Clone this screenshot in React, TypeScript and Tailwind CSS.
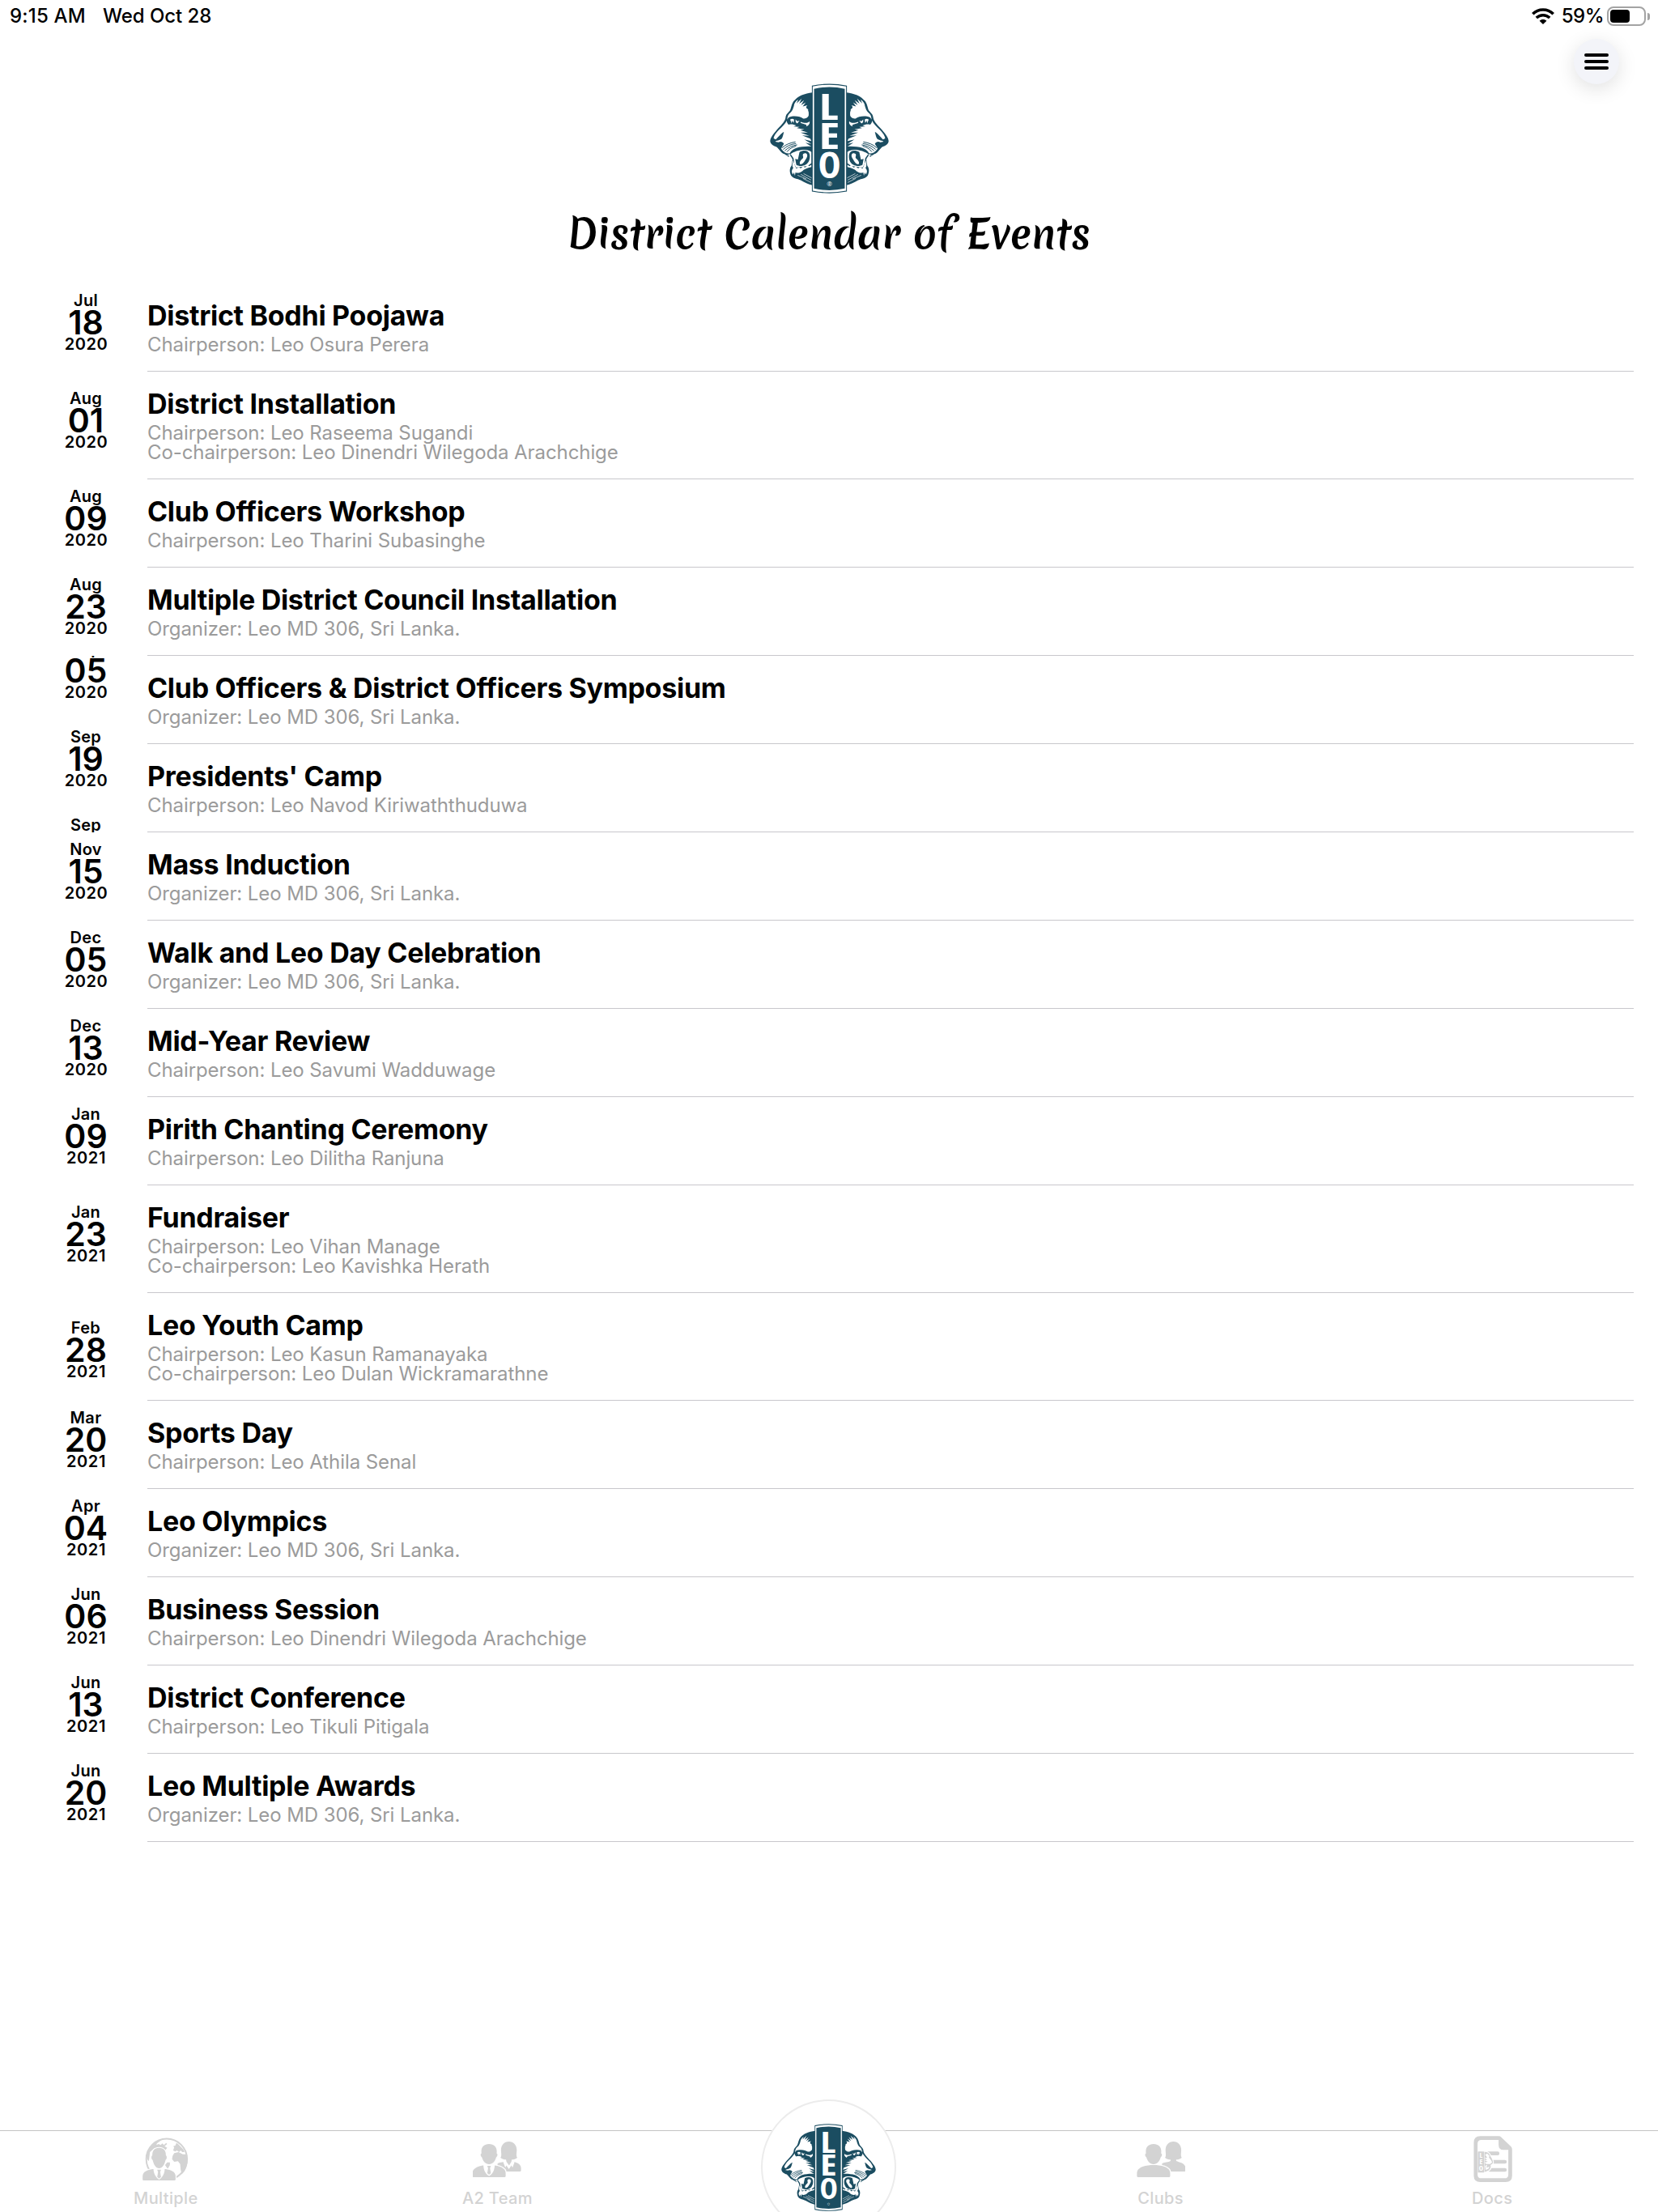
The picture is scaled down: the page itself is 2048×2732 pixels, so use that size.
import React from "react";

type EventRow = {
  month: string;
  day: string;
  year: string;
  title: string;
  lines: string[];
  align?: "middle" | "low" | "cut" | "raised";
  trailingMonth?: string;
};

const MD = "Organizer: Leo MD 306, Sri Lanka.";

const events: EventRow[] = [
  { month: "Jul", day: "18", year: "2020", title: "District Bodhi Poojawa", lines: ["Chairperson: Leo Osura Perera"] },
  {
    month: "Aug", day: "01", year: "2020", title: "District Installation", align: "middle",
    lines: ["Chairperson: Leo Raseema Sugandi", "Co-chairperson: Leo Dinendri Wilegoda Arachchige"],
  },
  { month: "Aug", day: "09", year: "2020", title: "Club Officers Workshop", lines: ["Chairperson: Leo Tharini Subasinghe"] },
  { month: "Aug", day: "23", year: "2020", title: "Multiple District Council Installation", lines: [MD] },
  { month: "Sep", day: "05", year: "2020", title: "Club Officers & District Officers Symposium", lines: [MD], align: "cut" },
  {
    month: "Sep", day: "19", year: "2020", title: "Presidents' Camp", align: "raised", trailingMonth: "Sep",
    lines: ["Chairperson: Leo Navod Kiriwaththuduwa"],
  },
  { month: "Nov", day: "15", year: "2020", title: "Mass Induction", lines: [MD] },
  { month: "Dec", day: "05", year: "2020", title: "Walk and Leo Day Celebration", lines: [MD] },
  { month: "Dec", day: "13", year: "2020", title: "Mid-Year Review", lines: ["Chairperson: Leo Savumi Wadduwage"] },
  { month: "Jan", day: "09", year: "2021", title: "Pirith Chanting Ceremony", lines: ["Chairperson: Leo Dilitha Ranjuna"] },
  {
    month: "Jan", day: "23", year: "2021", title: "Fundraiser", align: "middle",
    lines: ["Chairperson: Leo Vihan Manage", "Co-chairperson: Leo Kavishka Herath"],
  },
  {
    month: "Feb", day: "28", year: "2021", title: "Leo Youth Camp", align: "low",
    lines: ["Chairperson: Leo Kasun Ramanayaka", "Co-chairperson: Leo Dulan Wickramarathne"],
  },
  { month: "Mar", day: "20", year: "2021", title: "Sports Day", lines: ["Chairperson: Leo Athila Senal"] },
  { month: "Apr", day: "04", year: "2021", title: "Leo Olympics", lines: [MD] },
  { month: "Jun", day: "06", year: "2021", title: "Business Session", lines: ["Chairperson: Leo Dinendri Wilegoda Arachchige"] },
  { month: "Jun", day: "13", year: "2021", title: "District Conference", lines: ["Chairperson: Leo Tikuli Pitigala"] },
  { month: "Jun", day: "20", year: "2021", title: "Leo Multiple Awards", lines: [MD] },
];

const TEAL = "#1b4d61";

function LionHead() {
  return (
    <g>
      <path
        fill={TEAL}
        d="M220 71C192 74 165 84 150 104C141 117 141 132 136 139C126 150 121 154 120 166C118 180 100 196 88 210C75 226 64 238 63 252C64 264 76 270 88 274C98 284 104 296 116 300C122 304 128 306 131 311L136 304C140 310 144 314 146 320L142 344C134 352 135 368 141 380C150 392 164 390 176 397C190 405 205 412 220 416Z"
      />
      <path
        fill="#fff"
        d="M151 122C152 112 158 104 167 98L161 112L180 94L171 113L189 100L178 118L195 108L184 123L201 119C194 127 197 130 204 134C202 139 208 144 206 152C208 162 196 170 186 168C176 162 160 157 140 161C133 162 130 165 126 172C128 160 129 154 137 147C146 140 148 132 151 122Z"
      />
      <path
        fill="#fff"
        d="M125 176C124 184 129 188 132 191C140 188 152 190 160 194L150 198L172 199L162 204L190 208L175 211L203 220L176 220L208 232L182 231L212 243L216 252L190 246L216 262L194 258L216 272C200 270 178 272 160 277C148 281 140 288 136 297C126 300 114 294 104 280C107 272 110 268 114 262C110 256 104 252 94 256L82 254C84 250 100 250 106 243C110 236 112 226 114 218C104 222 96 234 84 246L76 242C76 234 84 222 96 210C108 198 118 188 125 176Z"
      />
      <path fill="#fff" d="M137 172C142 168 148 168 152 172L150 184L144 176L143 186ZM157 171L164 178L172 176L164 186L158 182ZM176 180C190 186 204 186 209 178C212 186 206 194 196 198C203 190 192 190 176 184Z" />
      <path
        fill="none"
        stroke={TEAL}
        strokeWidth="3"
        strokeLinecap="round"
        d="M108 276C120 264 138 258 156 255M112 282C124 270 142 263 158 261M118 287C130 275 146 268 162 266M126 291C134 280 146 274 158 271"
      />
      <path fill="#fff" d="M126 303L138 300L137 308ZM139 300C155 286 200 276 216 292V334L202 344L160 350L152 336L150 316Z" />
      <path fill={TEAL} d="M172 292C188 283 207 286 210 302C212 320 206 333 194 340C184 346 168 346 160 340L156 318L166 320Z" />
      <path fill="#fff" d="M186 299C198 293 205 303 198 315C191 325 188 336 176 338C169 334 175 323 183 317C190 311 181 306 186 299Z" />
      <path
        fill="#fff"
        d="M147 324L155 343L160 354L170 348L176 353L186 345L192 350L203 341L208 345L216 340L216 348C200 352 188 356 182 364C174 370 164 372 157 368L155 380L151 368L148 376C140 366 144 358 149 352C144 346 145 334 147 324Z"
      />
      <path
        fill="none"
        stroke="#fff"
        strokeWidth="2"
        strokeLinecap="round"
        d="M166 379L196 392M178 376L214 396M188 373L216 388M186 391L214 405"
      />
    </g>
  );
}

function LeoLogo({ className, mark = "®" }: { className: string; mark?: string }) {
  return (
    <svg viewBox="62 38 442 408" className={className} aria-label="Leo emblem">
      <LionHead />
      <g transform="translate(566 0) scale(-1 1)">
        <LionHead />
      </g>
      <path fill={TEAL} d="M218 46Q283 32 348 46V439Q283 452 218 439Z" />
      <path fill="#fff" d="M221 49Q283 36 345 49V436Q283 448 221 436Z" />
      <path fill={TEAL} d="M226 58Q283 44 340 58V428Q283 441 226 428Z" />
      <g fill="#fff" textAnchor="middle" className="font-['Open_Sans'] text-[136px] font-bold [font-stretch:75%]">
        <text transform="translate(281 173) scale(1.28 1)">L</text>
        <text transform="translate(283 281) scale(1.32 1)">E</text>
        <text transform="translate(283.500 390) scale(1.05 1)">O</text>
      </g>
      <text x="283" y="418" fill="#fff" textAnchor="middle" className="font-['Open_Sans'] text-[24px]">
        {mark}
      </text>
    </svg>
  );
}

function DateBlock({ month, day, year }: { month: string; day: string; year: string }) {
  return (
    <div className="text-center font-semibold text-black">
      <div className="text-[20px] leading-[24px] tracking-[0.3px]">{month}</div>
      <div className="text-[41px] leading-[30px]">{day}</div>
      <div className="pl-px pt-px text-[20px] leading-[22px] tracking-[0.6px]">{year}</div>
    </div>
  );
}

const dateOffset = {
  top: "pt-[9px]",
  middle: "pt-[21px]",
  low: "pt-[31px]",
  cut: "overflow-hidden",
  raised: "[clip-path:inset(-40px_0_0_0)]",
};

const blockOffset = {
  top: "",
  middle: "",
  low: "",
  cut: "-mt-[21px]",
  raised: "-mt-[21px]",
};

function Row({ event }: { event: EventRow }) {
  const align = event.align ?? "top";
  const tall = event.lines.length > 1;
  return (
    <li className={tall ? "flex h-[133px] pr-[30px]" : "flex h-[109px] pr-[30px]"}>
      <div className={`h-full w-[182px] shrink-0 pl-[30px] ${dateOffset[align]}`}>
        <div className={blockOffset[align]}>
          <DateBlock month={event.month} day={event.day} year={event.year} />
          {event.trailingMonth && (
            <div className="mt-8 text-center text-[20px] font-semibold leading-[24px] tracking-[0.3px]">{event.trailingMonth}</div>
          )}
        </div>
      </div>
      <div className="flex-1 border-b border-[#c8c7cc] pt-[18px]">
        <h2 className="text-[34px] font-bold leading-[43px] tracking-[-0.28px] text-black">{event.title}</h2>
        <div className="mt-[3px] text-[24px] leading-[24px] tracking-[-0.085px] text-[#9b9b9b]">
          {event.lines.map((line) => (
            <p key={line}>{line}</p>
          ))}
        </div>
      </div>
    </li>
  );
}

function StatusBar() {
  return (
    <header className="flex h-12 items-start pl-[12px] pr-[10px] pt-[6px] text-[24px] font-medium leading-[28px] text-black">
      <span className="tracking-[0.2px]">9:15 AM</span>
      <span className="ml-[21px] tracking-[-0.05px]">Wed Oct 28</span>
      <svg viewBox="0 0 28 20" className="ml-auto mt-1 h-5 w-7" fill="none" stroke="#000" strokeWidth="3.6">
        <path d="M1.3 7.2C8.3 .2 19.700 .2 26.700 7.2" />
        <path d="M5.800 12C10.500 7.600 17.500 7.600 22.200 12" />
        <path d="M14 20L9.600 15.700C12 13.400 16 13.400 18.400 15.700Z" fill="#000" stroke="none" />
      </svg>
      <span className="ml-[9px] tracking-[-0.5px]">59%</span>
      <span className="ml-[4px] mt-0.5 flex h-6 w-12 items-center rounded-[8px] border-2 border-[#a3a3a3] px-0.5">
        <span className="h-4 w-6 rounded-[4px] bg-black" />
      </span>
      <span className="ml-0.5 mt-[10px] h-[9px] w-[3px] rounded-r-full bg-[#a3a3a3]" />
    </header>
  );
}

function PairIcon({ suits, viewBox }: { suits?: boolean; viewBox: string }) {
  return (
    <svg viewBox={viewBox} className="size-[60px]" fill="#d3d3d3">
      <path d="M45 0C51 0 54.500 4.500 54.700 10C54.800 14 53.500 17 55.300 20C53.500 21.500 51 22.300 48.500 22.300V24C53 26 60 26.500 60 33V35.500Q60 37 58.500 37H31V27C34 25.500 39 25.500 41.500 24V22.300C39 22.300 36.500 21.500 34.700 20C36.500 17 35.200 14 35.300 10C35.500 4.500 39 0 45 0Z" />
      {suits && (
        <path fill="#fff" d="M41.400 22.500L38 25.500L40.500 32L42 29.500L45 34L48 29.500L49.500 32L52 25.500L48.600 22.500L48 25L45.300 29.500L42 25Z" />
      )}
      <path
        stroke="#fff"
        strokeWidth="2.600"
        paintOrder="stroke"
        d="M0 42.500V39C0 31 12 29 20.500 29S41 31 41 39V42.500Q41 44 39.500 44H1.500Q0 44 0 42.500Z"
      />
      <path d="M20.500 3C26.500 3 30 6.500 30 12L29.900 14.800C31.500 15.300 31 18.500 29.400 19.300C28 24.500 25 28 20.500 28S13 24.500 11.600 19.300C10 18.500 9.500 15.300 11.100 14.800L11 12C11 6.500 14.500 3 20.500 3Z" />
      {suits && (
        <>
          <path fill="#fff" d="M13.500 28.500C13.500 35 16 40 20.500 42.500C25 40 27.500 35 27.500 28.500Z" />
          <path d="M18.300 30H22.700L21.700 33L22.700 39L20.500 41L18.300 39L19.300 33Z" />
        </>
      )}
    </svg>
  );
}

function GlobeIcon() {
  return (
    <svg viewBox="29.4 15 180 180" className="size-[60px]" fill="#d3d3d3">
      <circle cx="122" cy="110" r="75.500" fill="none" stroke="#d3d3d3" strokeWidth="6" />
      <path d="M50 92C58 60 80 44 108 36L86 52L84 58L92 54L100 58L106 52L112 58L120 50L124 54L114 62L124 68L116 78L108 70L92 70L76 70L60 84L56 118L50 110Z" />
      <path d="M148 72L150 66L146 62L154 60L158 50L164 54L176 66L184 74L188 84L180 84L174 78L168 84L160 78L154 82L146 78Z" />
      <path d="M150 88L166 84L182 92L196 92C204 120 196 150 178 166L174 150L172 128L164 118L150 120L142 110L144 98Z" />
      <path d="M116 132L124 122L134 122L134 132L126 146Z" />
      <path stroke="#fff" strokeWidth="7" paintOrder="stroke" d="M33 185V174C33 156 50 150 70 147H118C138 150 155 156 155 174V185Q155 189 151 189H37Q33 189 33 185Z" />
      <path stroke="#fff" strokeWidth="6" paintOrder="stroke" d="M94 68C112 68 120 80 119 96C124 100 123 110 118 113C114 130 106 144 94 144S74 130 70 113C65 110 64 100 69 96C68 80 76 68 94 68Z" />
      <path fill="#fff" d="M73 146C74 165 82 178 94 186C106 178 114 165 115 146Z" />
      <path d="M87 149H101L98 158L101 176L94 182L87 176L90 158Z" />
    </svg>
  );
}

function DocIcon() {
  return (
    <svg viewBox="39.6 15 180 180" className="size-[60px]" fill="#d3d3d3">
      <path fillRule="evenodd" d="M86 25H154Q160 25 164 29L200 64Q204 68 204 74V172Q204 195 180 195H86Q62 195 62 172V49Q62 25 86 25ZM90 39Q76 39 76 53V167Q76 181 90 181H176Q190 181 190 167V76H172Q154 76 154 58V39Z" />
      <path fill="none" stroke="#d3d3d3" strokeWidth="14" strokeLinecap="round" d="M116 89H150M130 120H177M122 150H177" />
      <path stroke="#fff" strokeWidth="7" paintOrder="stroke" d="M98 84C110 82 120 88 123 98C130 110 136 120 132 126L124 132C128 144 118 156 98 158Z" />
      <path fill="#fff" d="M104 94L112 90L120 98L118 104L126 114L130 122L122 128L108 128L102 122L114 120L102 114L112 112L102 106L112 104ZM104 134L112 132L108 142L120 138L116 146L106 150Z" />
      <rect x="77" y="82" width="23" height="78" rx="2" stroke="#fff" strokeWidth="3" paintOrder="stroke" />
      <g fill="#fff" textAnchor="middle" className="font-['Open_Sans'] text-[27px] font-bold [font-stretch:75%]">
        <text x="88.500" y="105">L</text>
        <text x="88.500" y="129">E</text>
        <text x="88.500" y="153">O</text>
      </g>
    </svg>
  );
}

function Tab({ label, children }: { label: string; children: React.ReactNode }) {
  return (
    <div className="flex flex-1 flex-col items-center pt-[3px]">
      {children}
      <span className="mt-2 text-[20px] font-medium leading-[24px] tracking-[0.35px] text-[#d3d3d3]">{label}</span>
    </div>
  );
}

export default function App() {
  return (
    <div className="flex h-[2732px] w-full flex-col overflow-hidden bg-white font-['Inter',sans-serif]">
      <StatusBar />
      <div className="flex h-14 justify-end pr-12">
        <button className="flex size-14 flex-col items-center justify-center gap-1 rounded-full bg-[#f3f4f9] shadow-[0_6px_24px_rgba(0,0,0,0.12)]">
          <span className="h-1 w-[30px] rounded-full bg-black" />
          <span className="h-1 w-[30px] rounded-full bg-black" />
          <span className="h-1 w-[30px] rounded-full bg-black" />
        </button>
      </div>
      <div className="-mt-px flex h-[247px] flex-col items-center">
        <LeoLogo className="h-[136px] w-[147px]" />
        <h1 className="mt-4 font-['Merienda',serif] text-[48.2px] font-bold leading-[68px] text-black">
          District Calendar of Events
        </h1>
      </div>
      <ul>
        {events.map((event) => (
          <Row key={event.title} event={event} />
        ))}
      </ul>
      <nav className="mt-auto flex h-[101px] border-t border-[#c4c4c4]">
        <Tab label="Multiple">
          <GlobeIcon />
        </Tab>
        <Tab label="A2 Team">
          <PairIcon suits viewBox="0.4 -10 60 60" />
        </Tab>
        <div className="flex flex-1 justify-center">
          <div className="-mt-[39px] flex size-[167px] shrink-0 justify-center rounded-full border-2 border-[#ececec] bg-white pt-7">
            <LeoLogo mark="○" className="h-[108px] w-[117px]" />
          </div>
        </div>
        <Tab label="Clubs">
          <PairIcon viewBox="-0.4 -10 60 60" />
        </Tab>
        <Tab label="Docs">
          <DocIcon />
        </Tab>
      </nav>
    </div>
  );
}
